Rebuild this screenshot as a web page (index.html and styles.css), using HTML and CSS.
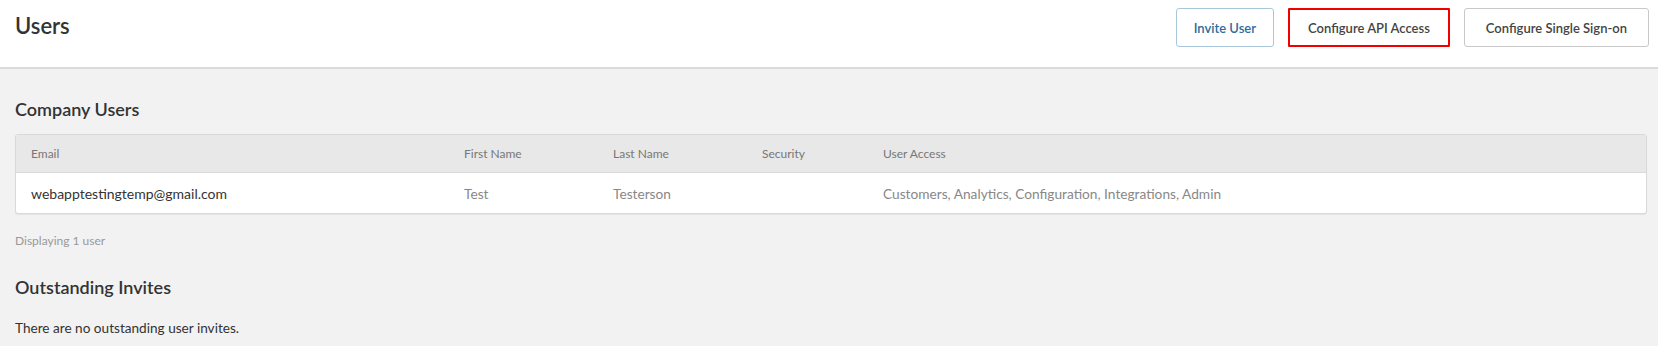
FILE: index.html
```html
<!DOCTYPE html>
<html lang="en">
<head>
  <meta charset="UTF-8">
  <title>Users</title>
  <link rel="stylesheet" href="styles.css">
</head>
<body>
  <header class="page-header">
    <h1>Users</h1>
    <div class="actions">
      <button class="btn btn-primary">Invite User</button>
      <button class="btn highlighted">Configure API Access</button>
      <button class="btn">Configure Single Sign-on</button>
    </div>
  </header>

  <main class="content">
    <h2>Company Users</h2>
    <div class="table-card">
      <table class="users-table">
        <colgroup>
          <col class="col-email">
          <col class="col-name">
          <col class="col-name">
          <col class="col-security">
          <col>
        </colgroup>
        <thead>
          <tr>
            <th>Email</th>
            <th>First Name</th>
            <th>Last Name</th>
            <th>Security</th>
            <th>User Access</th>
          </tr>
        </thead>
        <tbody>
          <tr>
            <td class="email">webapptestingtemp@gmail.com</td>
            <td>Test</td>
            <td>Testerson</td>
            <td></td>
            <td>Customers, Analytics, Configuration, Integrations, Admin</td>
          </tr>
        </tbody>
      </table>
    </div>
    <p class="count">Displaying 1 user</p>

    <h2 class="invites-title">Outstanding Invites</h2>
    <p class="empty">There are no outstanding user invites.</p>
  </main>
</body>
</html>
```

FILE: styles.css
```css
body {
  margin: 0;
  background: #f2f2f2;
  font-family: 'Lato', 'Open Sans', sans-serif;
  color: #333;
}

.page-header {
  background: #fff;
  height: 69px;
  box-sizing: border-box;
  padding: 8px 9px 0 15px;
  display: flex;
  justify-content: space-between;
  align-items: flex-start;
  border-bottom: 2px solid #dadada;
}

.page-header h1 {
  margin: 0;
  font-size: 22px;
  font-weight: 600;
  line-height: 36px;
  color: #333;
}

.actions {
  display: flex;
  gap: 14px;
}

.btn {
  height: 39px;
  padding: 0 21px;
  background: #fff;
  border: 1px solid #c8c8c8;
  border-radius: 3px;
  font-family: inherit;
  font-size: 13px;
  font-weight: 600;
  color: #444;
  cursor: pointer;
}

.btn-primary {
  color: #2a6c9f;
  border-color: #a9c7db;
  padding: 0 17px;
}

.highlighted {
  border: 2px solid #f20000;
  border-radius: 1px;
  padding: 0 18px;
}

.content {
  padding: 0 11px 0 15px;
}

.content h2 {
  margin: 29px 0 14px;
  font-size: 18px;
  line-height: 22px;
  font-weight: 600;
  color: #333;
}

.table-card {
  background: #fff;
  border: 1px solid #d9d9d9;
  border-radius: 3px;
  box-shadow: 0 1px 1px rgba(0, 0, 0, 0.06);
  overflow: hidden;
}

.users-table {
  width: 100%;
  border-collapse: collapse;
  table-layout: fixed;
}

.col-email { width: 433px; }
.col-name { width: 149px; }
.col-security { width: 121px; }

.users-table th {
  background: #e8e8e8;
  height: 37px;
  padding: 0 15px;
  text-align: left;
  font-size: 12px;
  font-weight: 400;
  color: #777;
  border-bottom: 1px solid #d9d9d9;
}

.users-table td {
  height: 40px;
  padding: 0 15px;
  font-size: 13.7px;
  color: #888;
  white-space: nowrap;
}

.users-table td.email {
  color: #333;
  font-size: 14px;
}

.count {
  margin: 19px 0 0;
  font-size: 12px;
  line-height: 16px;
  color: #999;
}

.content .invites-title {
  margin: 27px 0 0;
}

.empty {
  margin: 20px 0 0;
  font-size: 13.6px;
  line-height: 20px;
  color: #333;
}
```
